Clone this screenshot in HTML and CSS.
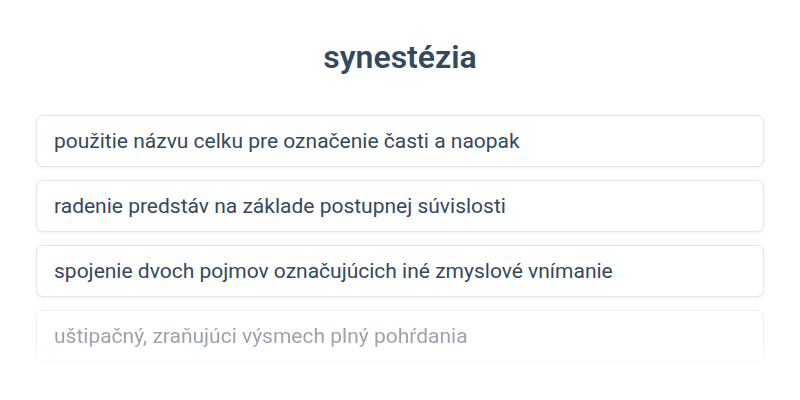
FILE: index.html
```html
<!DOCTYPE html>
<html lang="sk">
<head>
  <meta charset="UTF-8">
  <meta name="viewport" content="width=device-width, initial-scale=1.0">
  <title>synestézia</title>
  <link rel="stylesheet" href="styles.css">
</head>
<body>
  <div class="container">
    <h1>synestézia</h1>

    <div class="options">
      <button class="option">použitie názvu celku pre označenie časti a naopak</button>
      <button class="option">radenie predstáv na základe postupnej súvislosti</button>
      <button class="option">spojenie dvoch pojmov označujúcich iné zmyslové vnímanie</button>
      <button class="option faded">uštipačný, zraňujúci výsmech plný pohŕdania</button>
    </div>
  </div>
</body>
</html>
```

FILE: styles.css
```css
body {
  font-family: Roboto, "Noto Sans", sans-serif;
  background-color: #fff;
  color: #34495e;
  margin: 0;
  padding: 0;
}
.container {
  max-width: 728px;
  margin: 0 auto;
  padding: 37px 0 0;
}
h1 {
  font-size: 32px;
  font-weight: 600;
  text-align: center;
  margin: 0 0 38px;
  line-height: 40px;
  color: #34495e;
}
.options {
  display: flex;
  flex-direction: column;
  gap: 13px;
}
.option {
  display: block;
  width: 100%;
  text-align: left;
  font-family: inherit;
  font-size: 21px;
  line-height: 24px;
  color: #34495e;
  background-color: #fff;
  border: 1px solid #e4e4e4;
  border-radius: 7px;
  padding: 13px 17px;
  box-shadow: 0 1px 4px rgba(0, 0, 0, 0.06);
  cursor: pointer;
}
.option.faded {
  opacity: 0.5;
  -webkit-mask-image: linear-gradient(to bottom, #000 60%, rgba(0, 0, 0, 0.5));
  mask-image: linear-gradient(to bottom, #000 60%, rgba(0, 0, 0, 0.5));
}
```
